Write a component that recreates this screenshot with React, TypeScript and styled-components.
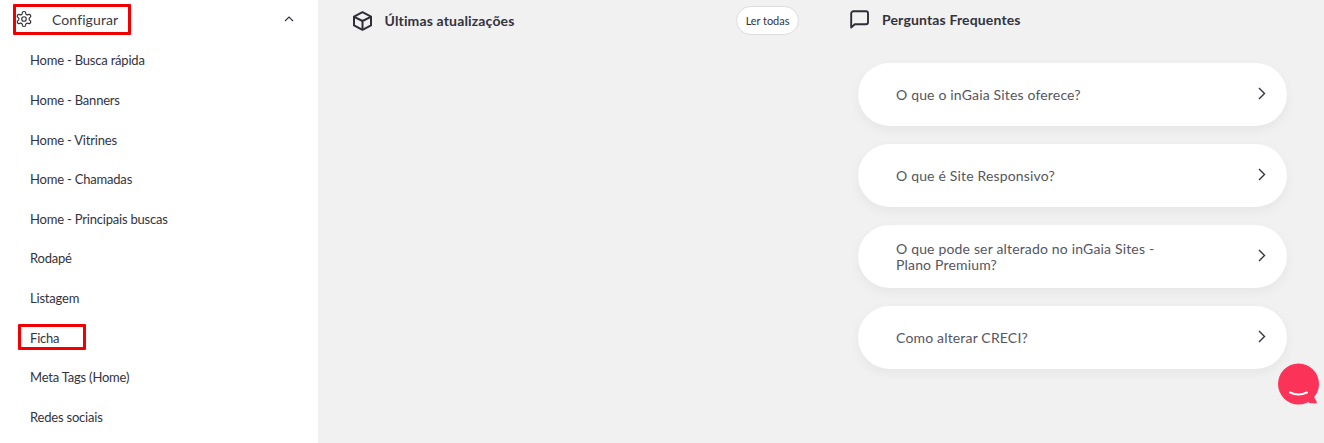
import React from "react";
import styled, { createGlobalStyle } from "styled-components";

const Global = createGlobalStyle`
  html, body { margin: 0; padding: 0; height: 443px; overflow: hidden; background: #f1f1f1; }
  body { font-family: Lato, "Liberation Sans", sans-serif; }
`;
const Page = styled.div`
  position: relative; display: flex; width: 1324px; height: 443px; overflow: hidden; background: #f1f1f1;
`;
const Sidebar = styled.aside`
  flex: 0 0 318px; background: #fff; display: flex; flex-direction: column;
`;
const MenuHead = styled.div`
  display: flex; align-items: center; height: 38px; padding: 0 24px 0 15px; color: #3a3a44; font-size: 14px;
`;
const HeadLabel = styled.span`
  margin-left: 19px; flex: 1; letter-spacing: 0.1px;
`;
const MenuList = styled.ul`
  list-style: none; margin: 0; padding: 3.4px 0 0 30px;
`;
const MenuItem = styled.li`
  height: 39.6px; line-height: 39.6px; font-size: 13px; letter-spacing: -0.2px; color: #33333d;
`;
const Main = styled.main`
  flex: 1; display: flex; min-width: 0;
`;
const News = styled.section`
  flex: 0 0 481px; padding: 6px 0 0 35px; box-sizing: border-box;
`;
const SectionHead = styled.div`
  display: flex; align-items: center; height: 29px;
`;
const Title = styled.h2<{ $gap: number }>`
  margin: 0 0 0 ${(p) => p.$gap}px; flex: 1; font-size: 14px; font-weight: 700; color: #33333d; white-space: nowrap;
  letter-spacing: 0.15px;
`;
const ReadAll = styled.button`
  width: 63px; height: 29px; padding: 0; border: 1px solid #dcdcdc; border-radius: 15px; background: #fff;
  font-family: inherit; font-size: 11px; letter-spacing: -0.05px; color: #33333d; box-sizing: border-box;
`;
const Faq = styled.section`
  flex: 1; padding: 5px 37px 0 50px; box-sizing: border-box;
`;
const FaqList = styled.div`
  display: flex; flex-direction: column; gap: 18px; margin: 29px 0 0 9px;
`;
const FaqCard = styled.div`
  display: flex; align-items: center; justify-content: space-between; height: 63px; box-sizing: border-box;
  padding: 0 21px 0 38px; border-radius: 32px; background: #fff; box-shadow: 0 4px 12px rgba(0,0,0,0.05);
`;
const FaqText = styled.span`
  width: 280px; font-size: 14px; line-height: 16px; color: #555560; letter-spacing: 0.17px;
`;
const Chevron = styled.svg`
  flex: none; margin-top: -3px;
`;
const Mark = styled.div<{ $x: number; $y: number; $w: number; $h: number }>`
  position: absolute; left: ${(p) => p.$x}px; top: ${(p) => p.$y}px; width: ${(p) => p.$w}px; height: ${(p) => p.$h}px;
  box-sizing: border-box; border: 3px solid #f00000; border-radius: 1px; pointer-events: none;
`;
const ChatBubble = styled.svg`
  position: absolute; left: 1278px; top: 363px;
`;

const menu = ["Home - Busca rápida","Home - Banners","Home - Vitrines","Home - Chamadas","Home - Principais buscas","Rodapé","Listagem","Ficha","Meta Tags (Home)","Redes sociais"];
const faqs = ["O que o inGaia Sites oferece?","O que é Site Responsivo?","O que pode ser alterado no inGaia Sites - Plano Premium?","Como alterar CRECI?"];

const Gear = () => (
  <svg width="18" height="18" viewBox="0 0 24 24" fill="none" stroke="#33333d" strokeWidth="1.6" strokeLinecap="round" strokeLinejoin="round" style={{ marginTop: "-1px" }}>
    <path d="M12.22 2h-.44a2 2 0 0 0-2 2v.18a2 2 0 0 1-1 1.73l-.43.25a2 2 0 0 1-2 0l-.15-.08a2 2 0 0 0-2.73.73l-.22.38a2 2 0 0 0 .73 2.73l.15.1a2 2 0 0 1 1 1.72v.51a2 2 0 0 1-1 1.74l-.15.09a2 2 0 0 0-.73 2.73l.22.38a2 2 0 0 0 2.73.73l.15-.08a2 2 0 0 1 2 0l.43.25a2 2 0 0 1 1 1.73V20a2 2 0 0 0 2 2h.44a2 2 0 0 0 2-2v-.18a2 2 0 0 1 1-1.73l.43-.25a2 2 0 0 1 2 0l.15.08a2 2 0 0 0 2.73-.73l.22-.39a2 2 0 0 0-.73-2.73l-.15-.08a2 2 0 0 1-1-1.74v-.5a2 2 0 0 1 1-1.74l.15-.09a2 2 0 0 0 .73-2.73l-.22-.38a2 2 0 0 0-2.73-.73l-.15.08a2 2 0 0 1-2 0l-.43-.25a2 2 0 0 1-1-1.73V4a2 2 0 0 0-2-2z" />
    <circle cx="12" cy="12" r="3" />
  </svg>
);
const Cube = () => (
  <svg width="20" height="20" viewBox="0 0 20 20" fill="none" stroke="#2e2e38" strokeWidth="2" strokeLinejoin="round" style={{ flex: "none", marginLeft: "-0.5px" }}>
    <path d="M9.5 1.2 18 5.6v8.8l-8.5 4.4L1 14.4V5.6z" />
    <path d="M1.2 5.8 9.5 10l8.3-4.2M9.5 10v8.5" />
  </svg>
);
const Speech = () => (
  <svg width="19" height="19" viewBox="0 0 19 19" fill="none" stroke="#2e2e38" strokeWidth="1.9" strokeLinejoin="round" style={{ flex: "none", marginLeft: "1px", marginTop: "-1px" }}>
    <path d="M3.5 1.3h12.5a2 2 0 0 1 2 2v9a2 2 0 0 1-2 2H4.8L1.2 17.5V3.5a2.2 2.2 0 0 1 2.3-2.2z" />
  </svg>
);

export default function App() {
  return (
    <>
      <Global />
      <Page>
        <Sidebar>
          <MenuHead>
            <Gear />
            <HeadLabel>Configurar</HeadLabel>
            <svg width="10" height="6" viewBox="0 0 10 6" fill="none" stroke="#33333d" strokeWidth="1.1"><path d="M1 5l4-4 4 4" /></svg>
          </MenuHead>
          <MenuList>
            {menu.map((m) => <MenuItem key={m}>{m}</MenuItem>)}
          </MenuList>
        </Sidebar>
        <Main>
          <News>
            <SectionHead>
              <Cube />
              <Title $gap={12}>Últimas atualizações</Title>
              <ReadAll>Ler todas</ReadAll>
            </SectionHead>
          </News>
          <Faq>
            <SectionHead>
              <Speech />
              <Title $gap={13}>Perguntas Frequentes</Title>
            </SectionHead>
            <FaqList>
              {faqs.map((f) => (
                <FaqCard key={f}>
                  <FaqText>{f}</FaqText>
                  <Chevron width="8" height="13" viewBox="0 0 8 13" fill="none" stroke="#33333d" strokeWidth="1.4"><path d="M1 1l5.5 5.5L1 12" /></Chevron>
                </FaqCard>
              ))}
            </FaqList>
          </Faq>
        </Main>
        <Mark $x={13} $y={4} $w={118} $h={31} />
        <Mark $x={18} $y={324} $w={68} $h={26} />
        <ChatBubble width="42" height="44" viewBox="0 0 42 44">
          <circle cx="20.5" cy="21" r="20.5" fill="#fb3358" />
          <path d="M30 38 L35 32 L39 39.5 L37.5 40.5 L31 40 Z" fill="#fb3358" />
          <path d="M12 29.5q8.5 4 17 0" fill="none" stroke="#fff" strokeWidth="2" strokeLinecap="round" />
        </ChatBubble>
      </Page>
    </>
  );
}
